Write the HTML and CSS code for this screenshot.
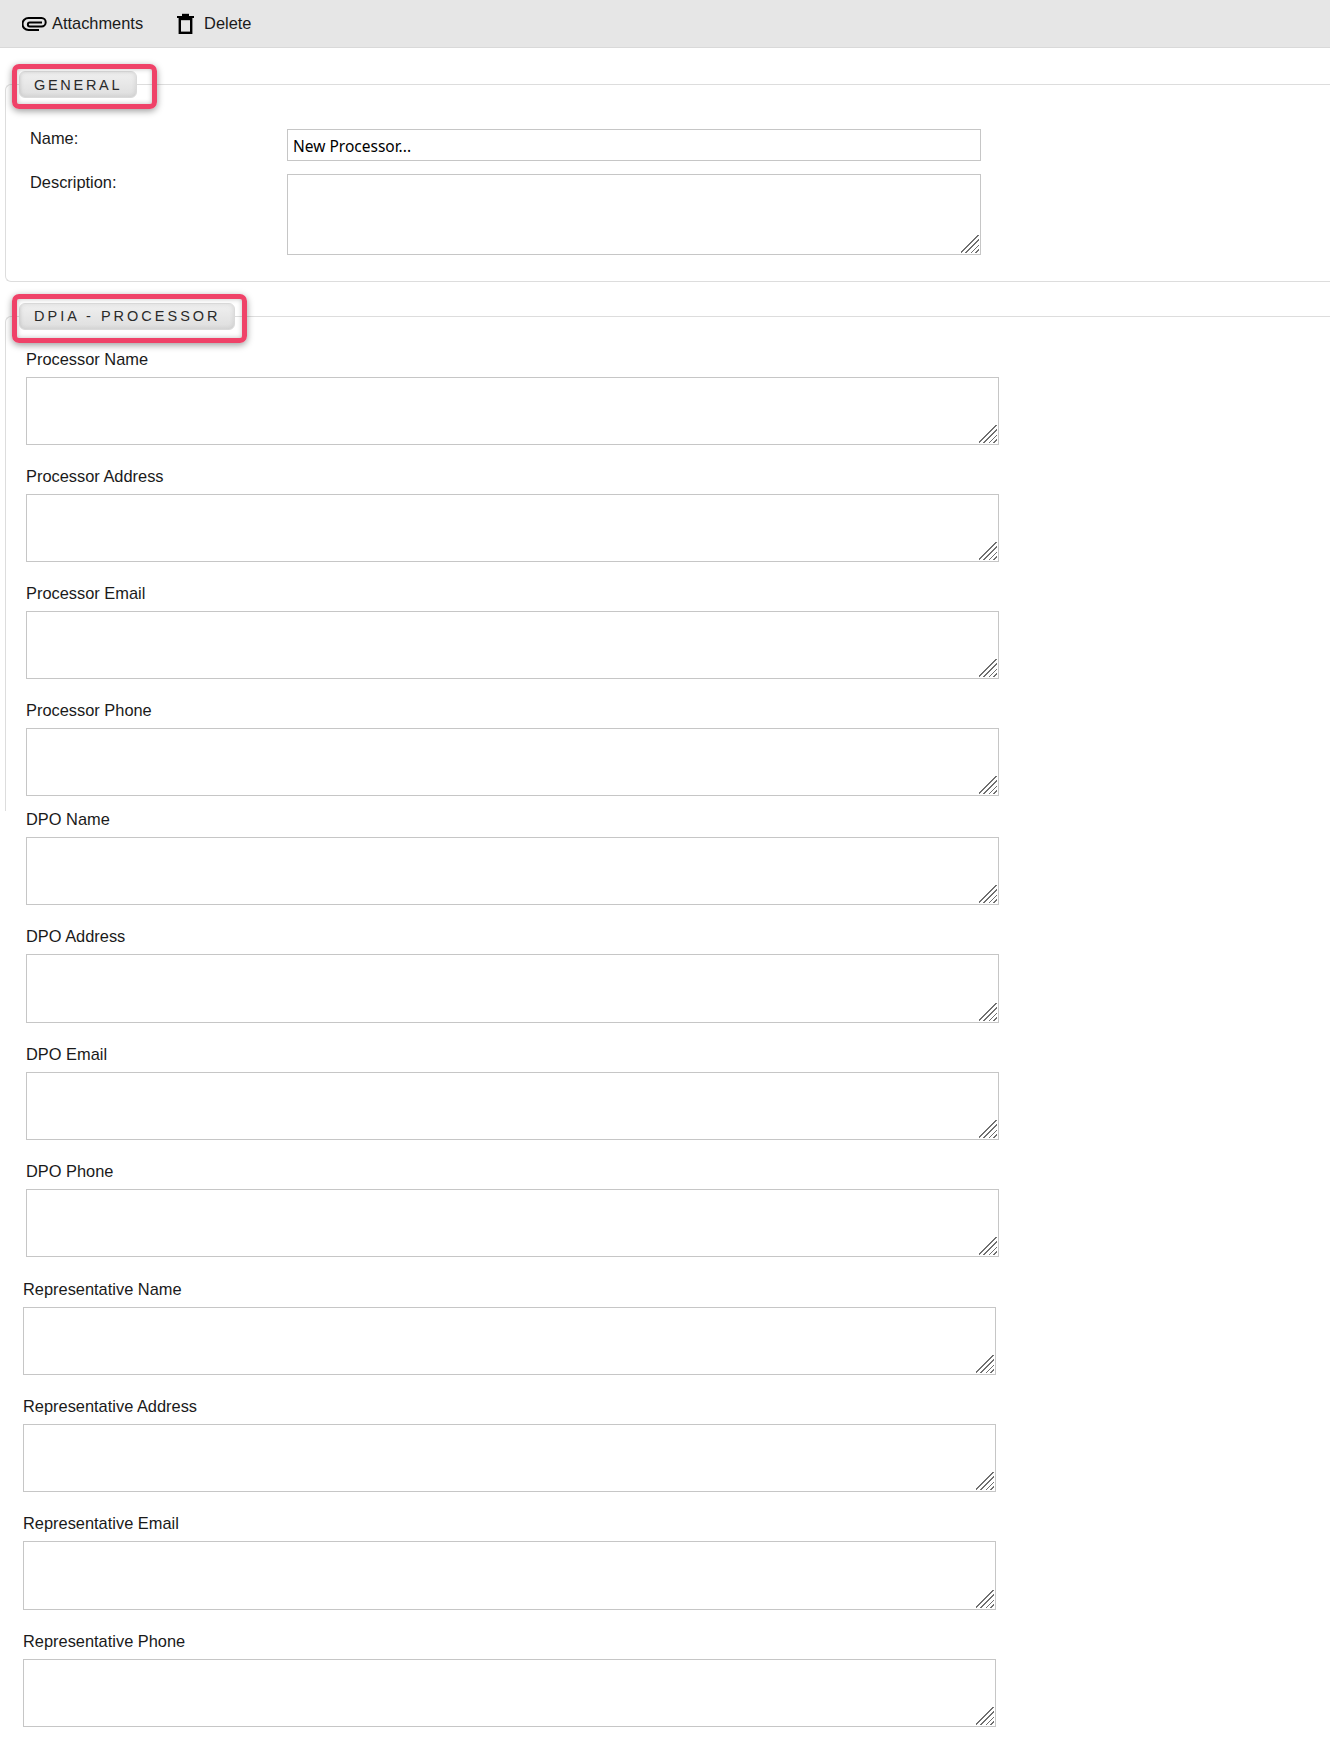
FILE: index.html
```html
<!DOCTYPE html>
<html lang="en">
<head>
    <meta charset="UTF-8">
    <meta name="viewport" content="width=device-width, initial-scale=1.0">
    <title>New Processor</title>
    <link rel="stylesheet" href="styles.css">
</head>
<body>

    <div class="toolbar">
        <a class="tool tool-attachments">
            <svg class="icon-clip" width="25" height="14" viewBox="0 0 25 14" fill="none" stroke="#000" stroke-width="2">
                <path d="M17 13H6.5a5.5 5.5 0 0 1 0-12H19.5a4.2 4.2 0 0 1 0 8.4H7.8a1.9 1.9 0 0 1 0-3.9H20"/>
            </svg>
            Attachments
        </a>
        <a class="tool tool-delete">
            <svg class="icon-trash" width="17" height="21" viewBox="0 0 17 21" fill="none" stroke="#000">
                <path d="M0 4H17" stroke-width="2"/>
                <path d="M5 2H12" stroke-width="2.4"/>
                <rect x="2.8" y="6" width="11.4" height="13.8" stroke-width="2.4"/>
            </svg>
            Delete
        </a>
    </div>

    <section class="panel panel-general">
        <div class="panel-title">General</div>
        <div class="highlight highlight-general"></div>
        <div class="general-form">
            <label class="label-name" for="name">Name:</label>
            <input type="text" id="name" value="New Processor...">
            <label for="description">Description:</label>
            <textarea id="description"></textarea>
        </div>
    </section>

    <section class="panel panel-dpia">
        <div class="panel-title">DPIA - Processor</div>
        <div class="highlight highlight-dpia"></div>
        <div class="field-group group-processor">
            <div class="field"><label for="procName">Processor Name</label><textarea id="procName"></textarea></div>
            <div class="field"><label for="procAddress">Processor Address</label><textarea id="procAddress"></textarea></div>
            <div class="field"><label for="procEmail">Processor Email</label><textarea id="procEmail"></textarea></div>
            <div class="field"><label for="procPhone">Processor Phone</label><textarea id="procPhone"></textarea></div>
        </div>
    </section>

    <div class="field-group group-dpo">
        <div class="field"><label for="dpoName">DPO Name</label><textarea id="dpoName"></textarea></div>
        <div class="field"><label for="dpoAddress">DPO Address</label><textarea id="dpoAddress"></textarea></div>
        <div class="field"><label for="dpoEmail">DPO Email</label><textarea id="dpoEmail"></textarea></div>
        <div class="field"><label for="dpoPhone">DPO Phone</label><textarea id="dpoPhone"></textarea></div>
    </div>

    <div class="field-group group-rep">
        <div class="field"><label for="repName">Representative Name</label><textarea id="repName"></textarea></div>
        <div class="field"><label for="repAddress">Representative Address</label><textarea id="repAddress"></textarea></div>
        <div class="field"><label for="repEmail">Representative Email</label><textarea id="repEmail"></textarea></div>
        <div class="field"><label for="repPhone">Representative Phone</label><textarea id="repPhone"></textarea></div>
    </div>

</body>
</html>
```

FILE: styles.css
```css
body {
    font-family: "Liberation Sans", Arial, sans-serif;
    font-size: 16.4px;
    color: #1a1a1a;
    margin: 0;
    padding: 0 0 26px;
    background-color: #ffffff;
}

.toolbar {
    display: flex;
    align-items: center;
    height: 47px;
    padding-left: 22px;
    background-color: #e6e6e6;
    border-bottom: 1px solid #d9d9d9;
}

.tool {
    display: flex;
    align-items: center;
}

.tool-attachments {
    gap: 5px;
    margin-right: 34px;
}

.tool-delete {
    gap: 10px;
}

.panel {
    position: relative;
    margin-left: 5px;
    border: 1px solid #dddddd;
    border-right: none;
}

.panel-general {
    margin-top: 36px;
    padding-bottom: 26px;
    border-radius: 6px 0 0 6px;
}

.panel-dpia {
    margin-top: 34px;
    padding-bottom: 14.6px;
    border-bottom: none;
    border-radius: 6px 0 0 0;
}

.panel-title {
    box-sizing: border-box;
    width: fit-content;
    height: 27px;
    margin: -14px 0 0 13px;
    padding: 0 14px;
    font-size: 14.5px;
    line-height: 26px;
    letter-spacing: 2.7px;
    text-transform: uppercase;
    color: #2a2a2a;
    background: linear-gradient(#f0f0f0, #dedede);
    border: 1px solid #dadada;
    border-radius: 6px;
    box-shadow: inset 0 0 5px rgba(0, 0, 0, 0.1);
}

.panel-dpia .panel-title {
    padding-right: 13px;
    line-height: 25px;
    letter-spacing: 3px;
}

/* red annotation boxes drawn over the tabs */
.highlight {
    position: absolute;
    left: 6px;
    box-sizing: border-box;
    border: 5px solid #ef4268;
    border-radius: 7px;
    box-shadow: 0 2px 7px rgba(0, 0, 0, 0.4), inset 0 0 5px rgba(0, 0, 0, 0.25);
    pointer-events: none;
}

.highlight-general {
    top: -21px;
    width: 145px;
    height: 45px;
}

.highlight-dpia {
    top: -23px;
    width: 235px;
    height: 49px;
}

label {
    display: block;
    line-height: 17.4px;
}

.label-name {
    padding-top: 1px;
}

input,
textarea {
    display: block;
    box-sizing: border-box;
    margin: 0;
    background-color: #ffffff;
    border: 1px solid #c6c6c6;
    border-radius: 0;
}

/* the resize grip of the reference is larger than the browser's own */
textarea {
    resize: none;
    background-image: repeating-linear-gradient(135deg,
        transparent 0, transparent 12px,
        #707070 12px, #707070 13.4px,
        transparent 13.4px, transparent 15.55px,
        #707070 15.55px, #707070 16.95px,
        transparent 16.95px, transparent 19.1px,
        #707070 19.1px, #707070 20.5px,
        transparent 20.5px, transparent 22.6px,
        #707070 22.6px, #707070 24px,
        transparent 24px, transparent 25.46px);
    background-size: 18px 18px;
    background-position: right 1px bottom 1px;
    background-repeat: no-repeat;
}

.general-form {
    display: grid;
    grid-template-columns: 257px 694px;
    row-gap: 13px;
    margin-top: 31px;
    padding-left: 24px;
}

.general-form input {
    height: 32px;
    padding: 2px 5px 0;
    font-family: "Noto Sans", Tahoma, sans-serif;
    font-size: 15.5px;
    color: #000000;
}

.general-form textarea {
    height: 81px;
}

.field-group {
    display: flex;
    flex-direction: column;
    gap: 22.93px;
}

.field {
    display: flex;
    flex-direction: column;
    gap: 8.6px;
}

.field textarea {
    width: 973px;
    height: 68.4px;
}

.group-processor {
    gap: 22.6px;
    margin: 21px 0 0 20px;
}

.group-dpo {
    margin-left: 26px;
}

.group-rep {
    margin: 23.3px 0 0 23px;
}
```
